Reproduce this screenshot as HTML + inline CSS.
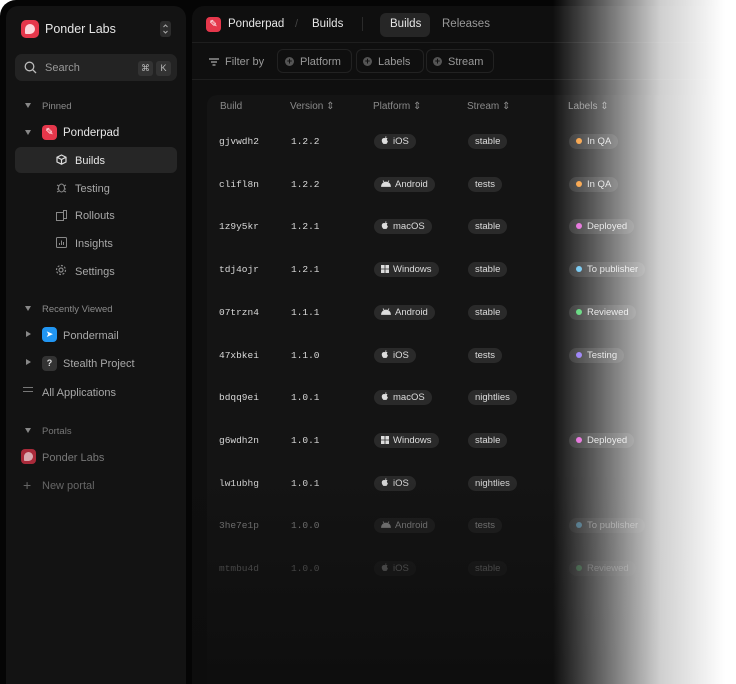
<!DOCTYPE html>
<html style="width:736px;height:684px;overflow:hidden"><head><style>
*{box-sizing:border-box;margin:0;padding:0}
body{width:736px;height:684px;overflow:hidden;background:#fff;font-family:"Liberation Sans",sans-serif;position:relative}
.frame{position:absolute;left:0;top:0;width:736px;height:684px;background:#050505;border-radius:16px 0 0 0;overflow:hidden}
.side{position:absolute;left:6px;top:6px;width:180px;height:700px;background:#131313;border-radius:12px}
.main{position:absolute;left:192px;top:6px;width:544px;height:700px;background:#0f0f0f;border-radius:12px 0 0 0;overflow:hidden}
.t{position:absolute;white-space:nowrap}
.g{color:#8a8a8a;font-size:10px}
.w{color:#e6e6e6;font-size:12px}
.nav{color:#a8a8a8;font-size:11px}
.tri{position:absolute;width:0;height:0;border-left:3.5px solid transparent;border-right:3.5px solid transparent;border-top:5px solid #888}
.trir{position:absolute;width:0;height:0;border-top:3.5px solid transparent;border-bottom:3.5px solid transparent;border-left:5px solid #888}
.pill{position:absolute;height:15px;border-radius:8px;background:#2a2a2a;color:#ddd;font-size:9.5px;line-height:15px;padding:0 7px;white-space:nowrap}
.mono{position:absolute;font-family:"Liberation Mono",monospace;font-size:9.5px;color:#d8d8d8}
.dot{display:inline-block;width:6px;height:6px;border-radius:3px;margin-right:5px;vertical-align:0}
.row{position:absolute;left:0;width:100%;height:43px}
</style></head><body>
<div class="frame">
<div class="side">
 <div style="position:absolute;left:15px;top:14px;width:18px;height:18px;border-radius:5px;background:#e5374b"><div style="position:absolute;left:4px;top:4px;width:10px;height:10px;border-radius:5px 5px 5px 1px;background:#fbd7dc"></div></div>
 <div class="t w" style="left:39px;top:16px;font-size:12.5px">Ponder Labs</div>
 <div style="position:absolute;left:154px;top:15px;width:11px;height:16px;border-radius:3px;background:#2c2c2c"></div>
 <svg style="position:absolute;left:156px;top:17px" width="7" height="12" viewBox="0 0 7 12" fill="none" stroke="#aaa" stroke-width="1"><path d="M1.5 4L3.5 2 5.5 4M1.5 8L3.5 10 5.5 8"/></svg>
 <div style="position:absolute;left:9px;top:48px;width:162px;height:27px;border-radius:7px;background:#232323"></div>
 <svg style="position:absolute;left:18px;top:55px" width="13" height="13" viewBox="0 0 13 13"><circle cx="5.5" cy="5.5" r="4.3" fill="none" stroke="#bbb" stroke-width="1.3"/><path d="M8.7 8.7L12 12" stroke="#bbb" stroke-width="1.3"/></svg>
 <div class="t" style="left:39px;top:56px;color:#999;font-size:11px">Search</div>
 <div style="position:absolute;left:132px;top:55px;width:15px;height:15px;border-radius:3px;background:#333;color:#bbb;font-size:9px;text-align:center;line-height:15px">⌘</div>
 <div style="position:absolute;left:150px;top:55px;width:15px;height:15px;border-radius:3px;background:#333;color:#bbb;font-size:9px;text-align:center;line-height:15px">K</div>
 <div class="tri" style="left:19px;top:97px"></div><div class="t g" style="left:36px;top:95px;font-size:9.5px">Pinned</div>
 <div class="tri" style="left:19px;top:124px"></div>
 <div style="position:absolute;left:36px;top:119px;width:15px;height:15px;border-radius:4px;background:#e5374b;color:#fff;font-size:10px;text-align:center;line-height:15px">✎</div>
 <div class="t w" style="left:57px;top:121px;font-size:11.5px">Ponderpad</div>
 <div style="position:absolute;left:9px;top:141px;width:162px;height:26px;border-radius:6px;background:#262626"></div>
 <svg style="position:absolute;left:50px;top:148px" width="11" height="11" viewBox="0 0 11 11"><path d="M5.5 1L10 3.2V8L5.5 10.2 1 8V3.2ZM1 3.2L5.5 5.5 10 3.2M5.5 5.5V10" fill="none" stroke="#ddd" stroke-width="1.2"/></svg>
 <div class="t w" style="left:69px;top:149px;font-size:11px">Builds</div>
 <svg style="position:absolute;left:50px;top:176px" width="11" height="11" viewBox="0 0 11 11" fill="none" stroke="#888"><ellipse cx="5.5" cy="6" rx="3" ry="4"/><path d="M1 3l2 1M10 3L8 4M1 7h2M8 7h2M1 10l2-1M10 10L8 9"/></svg>
 <div class="t nav" style="left:69px;top:177px">Testing</div>
 <svg style="position:absolute;left:50px;top:204px" width="11" height="11" viewBox="0 0 11 11" fill="none" stroke="#888"><rect x="0.5" y="2.5" width="7" height="8"/><rect x="7.5" y="0.5" width="3" height="8"/></svg>
 <div class="t nav" style="left:69px;top:204px">Rollouts</div>
 <svg style="position:absolute;left:50px;top:231px" width="11" height="11" viewBox="0 0 11 11" fill="none" stroke="#888"><rect x="0.5" y="0.5" width="10" height="10" rx="1"/><path d="M3.5 8V6M5.5 8V3.5M7.5 8V5"/></svg>
 <div class="t nav" style="left:69px;top:232px">Insights</div>
 <svg style="position:absolute;left:49px;top:258px" width="12" height="12" viewBox="0 0 12 12" fill="none" stroke="#888" stroke-width="1.2"><circle cx="6" cy="6" r="2"/><circle cx="6" cy="6" r="4.5" stroke-dasharray="2 1.5"/></svg>
 <div class="t nav" style="left:69px;top:260px">Settings</div>
 <div class="tri" style="left:19px;top:300px"></div><div class="t g" style="left:36px;top:298px;font-size:9.5px">Recently Viewed</div>
 <div class="trir" style="left:20px;top:325px"></div>
 <div style="position:absolute;left:36px;top:321px;width:15px;height:15px;border-radius:4px;background:#2196f3;color:#fff;font-size:9px;text-align:center;line-height:15px">➤</div>
 <div class="t nav" style="left:57px;top:324px">Pondermail</div>
 <div class="trir" style="left:20px;top:353px"></div>
 <div style="position:absolute;left:36px;top:350px;width:15px;height:15px;border-radius:4px;background:#333;color:#ddd;font-size:9px;font-weight:bold;text-align:center;line-height:15px">?</div>
 <div class="t nav" style="left:57px;top:352px">Stealth Project</div>
 <div style="position:absolute;left:17px;top:381px;width:10px;height:5px;border-top:1.3px solid #777;border-bottom:1.3px solid #777"></div>
 <div class="t nav" style="left:36px;top:381px">All Applications</div>
 <div class="tri" style="left:19px;top:422px"></div><div class="t g" style="left:36px;top:420px;font-size:9.5px;color:#777">Portals</div>
 <div style="position:absolute;left:15px;top:443px;width:15px;height:15px;border-radius:4px;background:#a92a3a"><div style="position:absolute;left:3px;top:3px;width:9px;height:9px;border-radius:5px 5px 5px 1px;background:#d9a9b0"></div></div>
 <div class="t" style="left:36px;top:446px;color:#777;font-size:11px">Ponder Labs</div>
 <div class="t" style="left:17px;top:471px;color:#666;font-size:14px">+</div>
 <div class="t" style="left:36px;top:474px;color:#666;font-size:11px">New portal</div>
</div>
<div class="main">
 <div style="position:absolute;left:14px;top:11px;width:15px;height:15px;border-radius:4px;background:#e5374b;color:#fff;font-size:10px;text-align:center;line-height:15px">✎</div>
 <div class="t w" style="left:36px;top:12px;font-size:11.5px">Ponderpad</div>
 <div class="t" style="left:103px;top:12px;color:#444;font-size:11px">/</div>
 <div class="t w" style="left:120px;top:12px;font-size:11.5px">Builds</div>
 <div style="position:absolute;left:170px;top:11px;width:1px;height:14px;background:#2a2a2a"></div>
 <div style="position:absolute;left:188px;top:7px;width:50px;height:24px;border-radius:6px;background:#262626"></div>
 <div class="t w" style="left:198px;top:12px;font-size:11.5px">Builds</div>
 <div class="t" style="left:250px;top:12px;color:#999;font-size:11.5px">Releases</div>
 <div style="position:absolute;left:0;top:36px;width:100%;height:1px;background:#1e1e1e"></div>
 <svg style="position:absolute;left:17px;top:52px" width="10" height="8" viewBox="0 0 10 8" stroke="#aaa" stroke-width="1.2"><path d="M0 1h10M2 4h6M3.5 7h3"/></svg>
 <div class="t" style="left:33px;top:50px;color:#999;font-size:11px">Filter by</div>
 <div style="position:absolute;left:85px;top:43px;width:75px;height:24px;border:1px solid #222;border-radius:6px"></div>
 <div style="position:absolute;left:164px;top:43px;width:68px;height:24px;border:1px solid #222;border-radius:6px"></div>
 <div style="position:absolute;left:234px;top:43px;width:68px;height:24px;border:1px solid #222;border-radius:6px"></div>
 <div style="position:absolute;left:93px;top:51px;width:9px;height:9px;border-radius:5px;background:#555;color:#111;font-size:9px;line-height:9px;text-align:center;font-weight:bold">+</div>
 <div style="position:absolute;left:171px;top:51px;width:9px;height:9px;border-radius:5px;background:#555;color:#111;font-size:9px;line-height:9px;text-align:center;font-weight:bold">+</div>
 <div style="position:absolute;left:241px;top:51px;width:9px;height:9px;border-radius:5px;background:#555;color:#111;font-size:9px;line-height:9px;text-align:center;font-weight:bold">+</div>
 <div class="t" style="left:108px;top:50px;color:#999;font-size:11px">Platform</div>
 <div class="t" style="left:186px;top:50px;color:#999;font-size:11px">Labels</div>
 <div class="t" style="left:256px;top:50px;color:#999;font-size:11px">Stream</div>
 <div style="position:absolute;left:0;top:73px;width:100%;height:1px;background:#1e1e1e"></div>
 <div style="position:absolute;left:15px;top:89px;width:600px;height:640px;border-radius:10px;background:#141414"></div>
 <div class="t g" style="left:28px;top:95px">Build</div>
 <div class="t g" style="left:98px;top:95px">Version ⇕</div>
 <div class="t g" style="left:181px;top:95px">Platform ⇕</div>
 <div class="t g" style="left:275px;top:95px">Stream ⇕</div>
 <div class="t g" style="left:376px;top:95px">Labels ⇕</div>
 <div id="rows"></div>
</div>
</div>
<div style="position:absolute;left:192px;top:470px;width:544px;height:214px;background:linear-gradient(rgba(10,10,10,0),rgba(12,12,12,.75))"></div>
<div style="position:absolute;left:0;top:0;width:736px;height:684px;background:linear-gradient(90deg,rgba(255,255,255,0) 0,rgba(255,255,255,0) 553px,rgba(255,255,255,.35) 600px,rgba(255,255,255,.8) 660px,#fff 725px)"></div>
<script>
var d=[["gjvwdh2","1.2.2","iOS","stable","#f7962e","In QA"],["clifl8n","1.2.2","Android","tests","#f7962e","In QA"],["1z9y5kr","1.2.1","macOS","stable","#e25cd6","Deployed"],["tdj4ojr","1.2.1","Windows","stable","#5ec0f0","To publisher"],["07trzn4","1.1.1","Android","stable","#4bd36b","Reviewed"],["47xbkei","1.1.0","iOS","tests","#8a6cf5","Testing"],["bdqq9ei","1.0.1","macOS","nightlies","",""],["g6wdh2n","1.0.1","Windows","stable","#e25cd6","Deployed"],["lw1ubhg","1.0.1","iOS","nightlies","",""],["3he7e1p","1.0.0","Android","tests","#5ec0f0","To publisher"],["mtmbu4d","1.0.0","iOS","stable","#4bd36b","Reviewed"]];
var apple='<svg width="8" height="9" viewBox="0 0 8 9" style="vertical-align:-1px;margin-right:4px"><path d="M4 2.2C4.6 1.6 5.8 1.6 6.6 2.3 5.6 3 5.7 4.6 6.9 5.1 6.5 6.6 5.6 8.3 4.7 8 4.2 7.8 3.8 7.8 3.3 8 2.3 8.4 0.5 6 0.8 4 1 2.3 2.8 1.7 4 2.2ZM4.1 1.8C4 1 4.6 0.2 5.3 0.1 5.4 0.9 4.8 1.7 4.1 1.8Z" fill="#ddd"/></svg>';
var andr='<svg width="10" height="7" viewBox="0 0 10 7" style="vertical-align:0;margin-right:4px"><path d="M0.5 6.5A4.5 4.5 0 0 1 9.5 6.5Z M2 0.5L3 2M8 0.5L7 2" fill="#ddd" stroke="#ddd" stroke-width=".8"/></svg>';
var win='<svg width="8" height="8" viewBox="0 0 8 8" style="vertical-align:-1px;margin-right:4px"><path d="M0 0h3.6v3.6H0zM4.4 0H8v3.6H4.4zM0 4.4h3.6V8H0zM4.4 4.4H8V8H4.4z" fill="#ddd"/></svg>';
var h="";
d.forEach(function(r,i){var y=128+i*42.7;
var o=i<9?1:(i==9?.55:.4);
var p=r[2]=="iOS"||r[2]=="macOS"?apple:(r[2]=="Android"?andr:win);
h+='<div class="row" style="top:'+y+'px;opacity:'+o+'">'+
'<div class="mono" style="left:27px;top:2px">'+r[0]+'</div>'+
'<div class="mono" style="left:99px;top:2px">'+r[1]+'</div>'+
'<div class="pill" style="left:182px;top:0">'+p+r[2]+'</div>'+
'<div class="pill" style="left:276px;top:0">'+r[3]+'</div>'+
(r[5]?'<div class="pill" style="left:377px;top:0"><span class="dot" style="background:'+r[4]+'"></span>'+r[5]+'</div>':'')+'</div>';});
document.getElementById("rows").innerHTML=h;
</script>
</body></html>
